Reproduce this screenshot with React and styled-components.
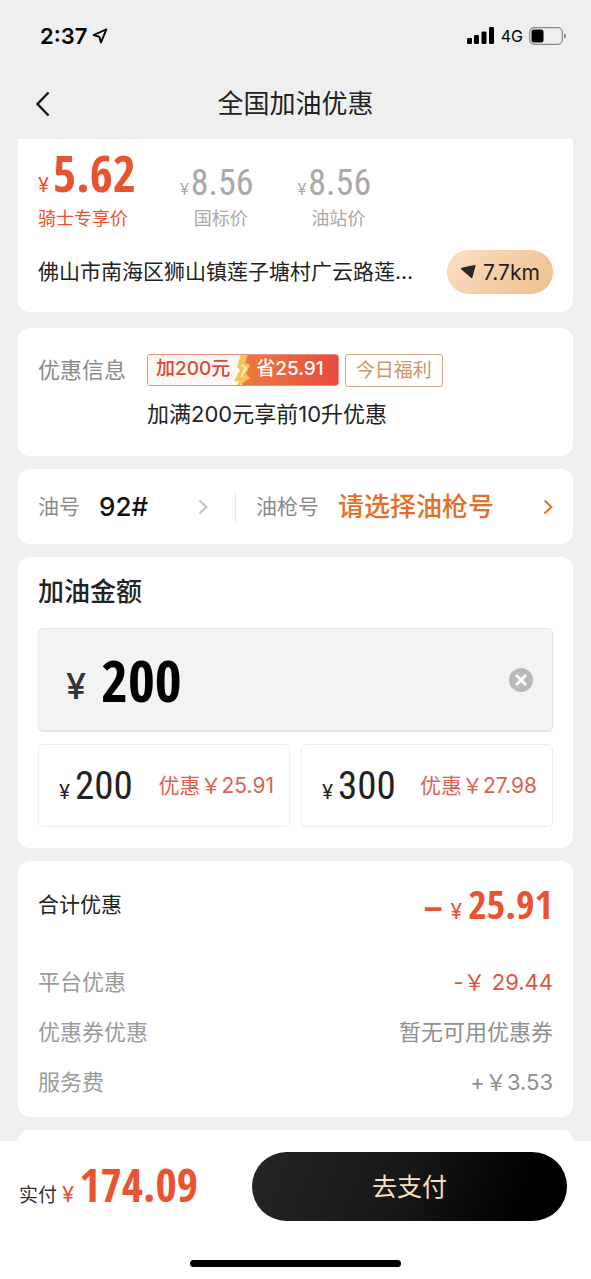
import React, { useState } from 'react';
import styled, { createGlobalStyle } from 'styled-components';

const prices = [
  { label: '骑士专享价', value: '5.62', main: true },
  { label: '国标价', value: '8.56' },
  { label: '油站价', value: '8.56' },
];

const presets = [
  { amount: '200', discount: '25.91' },
  { amount: '300', discount: '27.98' },
];

const fees = [
  { label: '平台优惠', value: '-￥ 29.44', accent: true },
  { label: '优惠券优惠', value: '暂无可用优惠券' },
  { label: '服务费', value: '+￥3.53' },
];

const Chevron = () => (
  <svg width="10" height="16" viewBox="0 0 10 16" fill="none" aria-hidden="true">
    <path d="M1.5 1.5L8.5 8L1.5 14.5" stroke="currentColor" strokeWidth="2" />
  </svg>
);

const LocationIcon = () => (
  <svg width="16" height="16" viewBox="0 0 16 16" fill="none" aria-hidden="true">
    <path d="M14.4 1.4L1.6 7L7.4 8.8L8.9 14.6Z" stroke="#000" strokeWidth="1.9" strokeLinejoin="round" />
  </svg>
);

const SignalIcon = () => (
  <svg width="28" height="18" viewBox="0 0 28 18" aria-hidden="true">
    <rect x="0" y="11" width="5" height="6" rx="1.3" />
    <rect x="7" y="8" width="5" height="9" rx="1.3" />
    <rect x="14.5" y="4.5" width="5" height="12.5" rx="1.3" />
    <rect x="22" y="0" width="5" height="17" rx="1.3" />
  </svg>
);

const BatteryIcon = () => (
  <svg width="38" height="18" viewBox="0 0 38 18" aria-hidden="true">
    <rect x="0.7" y="0.7" width="32.6" height="16.6" rx="4.5" fill="none" stroke="#8a8a8a" strokeWidth="1.2" />
    <rect x="2.5" y="2.5" width="12" height="13" rx="2.5" />
    <path d="M35 6v6q2-1 2-3t-2-3z" fill="#8a8a8a" />
  </svg>
);

const BackIcon = () => (
  <svg width="16" height="28" viewBox="0 0 16 28" fill="none" aria-hidden="true">
    <path d="M13.5 2.5L2.5 14L13.5 25.5" stroke="#111" strokeWidth="2.4" />
  </svg>
);

const NavIcon = () => (
  <svg width="17" height="16" viewBox="0 0 17 16" aria-hidden="true">
    <path d="M1.5 3.8L14.4 1Q15.9 0.8 15.5 2.1L12.4 13.4Q11.7 14.8 10.6 13.6L1.6 5.8Q0.4 4.4 1.5 3.8Z" fill="#2d2823" />
  </svg>
);

const BoltIcon = () => (
  <svg width="20" height="33" viewBox="0 0 20 33" aria-hidden="true">
    <path d="M9 0L16 0L13 9L18 11L14 20L18 24L5 33L7 27L2 27L8 16L5 13Z" fill="#f6c452" />
    <path d="M10 11L14 14L9 23" fill="none" stroke="#fdf0cf" strokeWidth="2" />
  </svg>
);

const ClearIcon = () => (
  <svg width="24" height="24" viewBox="0 0 24 24" aria-hidden="true">
    <circle cx="12" cy="12" r="12" fill="#b9b9b9" />
    <path d="M7 7L17 17M17 7L7 17" stroke="#fff" strokeWidth="2.6" />
  </svg>
);

export default function App() {
  const [amount, setAmount] = useState('200');

  return (
    <Screen>
      <GlobalStyle />
      <StatusBar>
        <Clock>
          2:37
          <LocationIcon />
        </Clock>
        <Network>
          <SignalIcon />
          4G
          <BatteryIcon />
        </Network>
      </StatusBar>
      <Header>
        <BackButton type="button" aria-label="返回">
          <BackIcon />
        </BackButton>
        <Title>全国加油优惠</Title>
      </Header>

      <Content>
        <StationCard>
          <Prices>
            {prices.map((price) => (
              <Price key={price.label} $main={price.main}>
                <PriceValue $main={price.main}>
                  <small>¥</small>
                  {price.value}
                </PriceValue>
                <PriceLabel $main={price.main}>{price.label}</PriceLabel>
              </Price>
            ))}
          </Prices>
          <AddressRow>
            <Address>佛山市南海区狮山镇莲子塘村广云路莲…</Address>
            <Distance type="button">
              <NavIcon />
              7.7km
            </Distance>
          </AddressRow>
        </StationCard>

        <PromoCard>
          <PromoLabel>优惠信息</PromoLabel>
          <div>
            <Tags>
              <SaveTag>
                <SaveFrom>加200元</SaveFrom>
                <SaveTo>
                  <Bolt>
                    <BoltIcon />
                  </Bolt>
                  省25.91
                </SaveTo>
              </SaveTag>
              <Tag>今日福利</Tag>
            </Tags>
            <PromoText>加满200元享前10升优惠</PromoText>
          </div>
        </PromoCard>

        <PickerCard>
          <OilPicker>
            <PickerLabel htmlFor="oil">油号</PickerLabel>
            <Select id="oil">
              <option>92#</option>
            </Select>
            <Chevron />
          </OilPicker>
          <GunPicker>
            <PickerLabel htmlFor="gun">油枪号</PickerLabel>
            <Select id="gun" $accent>
              <option>请选择油枪号</option>
            </Select>
            <Chevron />
          </GunPicker>
        </PickerCard>

        <AmountCard>
          <AmountTitle htmlFor="amount">加油金额</AmountTitle>
          <AmountBox>
            <span>¥</span>
            <AmountInput
              id="amount"
              inputMode="numeric"
              value={amount}
              onChange={(e) => setAmount(e.target.value)}
            />
            <ClearButton type="button" aria-label="清除" onClick={() => setAmount('')}>
              <ClearIcon />
            </ClearButton>
          </AmountBox>
          <Presets>
            {presets.map((preset) => (
              <Preset key={preset.amount} type="button" onClick={() => setAmount(preset.amount)}>
                <PresetAmount>
                  <small>¥</small>
                  {preset.amount}
                </PresetAmount>
                <PresetDiscount>优惠￥{preset.discount}</PresetDiscount>
              </Preset>
            ))}
          </Presets>
        </AmountCard>

        <SummaryCard>
          <Total>
            <TotalLabel>合计优惠</TotalLabel>
            <TotalValue>
              <b>−</b>
              <small>¥</small>
              25.91
            </TotalValue>
          </Total>
          {fees.map((fee) => (
            <Fee key={fee.label}>
              <dt>{fee.label}</dt>
              <FeeValue $accent={fee.accent}>{fee.value}</FeeValue>
            </Fee>
          ))}
        </SummaryCard>

        <NextCard />
      </Content>

      <Footer>
        <PayRow>
          <PayTotal>
            <span>实付</span>
            <small>¥</small>
            174.09
          </PayTotal>
          <PayButton type="button">去支付</PayButton>
        </PayRow>
        <HomeIndicator />
      </Footer>
    </Screen>
  );
}

const GlobalStyle = createGlobalStyle`
  * {
    box-sizing: border-box;
  }
  body {
    margin: 0;
    background: #efefef;
    color: #222;
    font-family: Inter, "Noto Sans CJK SC", sans-serif;
  }
  button, input, select {
    font-family: inherit;
    color: inherit;
    border: 0;
    padding: 0;
    background: none;
  }
  svg {
    flex: none;
    display: block;
  }
`;

const Screen = styled.div`
  display: flex;
  flex-direction: column;
  min-height: 100vh;
`;

const StatusBar = styled.div`
  display: flex;
  align-items: center;
  justify-content: space-between;
  height: 68px;
  padding: 4px 24px 0 40px;
`;

const Clock = styled.div`
  display: flex;
  align-items: center;
  gap: 5px;
  color: #000;
  font-size: 22px;
  font-weight: 600;
`;

const Network = styled.div`
  display: flex;
  align-items: center;
  gap: 6px;
  color: #000;
  font-size: 16px;
`;

const Header = styled.header`
  display: grid;
  grid-template-columns: 1fr auto 1fr;
  align-items: center;
  height: 71px;
  padding: 0 35px;
`;

const BackButton = styled.button`
  justify-self: start;
`;

const Title = styled.h1`
  margin: 0;
  font-size: 26px;
  font-weight: 400;
  line-height: 36px;
`;

const Content = styled.main`
  display: flex;
  flex-direction: column;
  flex: 1;
  gap: 13px;
  padding: 0 18px;
`;

const Card = styled.section`
  padding: 20px;
  border-radius: 12px;
  background: #fff;
`;

const StationCard = styled(Card)`
  margin-bottom: 3px;
  padding: 12px 20px 18px;
  border-radius: 0 0 12px 12px;
`;

const Prices = styled.div`
  display: flex;
  align-items: flex-end;
  gap: 44px;
`;

const Price = styled.div`
  color: ${(p) => (p.$main ? '#e9532f' : '#a9a9a9')};
`;

const PriceValue = styled.div`
  display: flex;
  align-items: baseline;
  gap: ${(p) => (p.$main ? '4px' : '2px')};
  font-family: ${(p) => (p.$main ? '"Open Sans Condensed"' : '"Roboto Condensed"')}, sans-serif;
  font-size: ${(p) => (p.$main ? '50px' : '36px')};
  font-weight: ${(p) => (p.$main ? 700 : 400)};
  line-height: ${(p) => (p.$main ? '44px' : '36px')};

  small {
    font-family: Inter, sans-serif;
    font-size: ${(p) => (p.$main ? '20px' : '16px')};
    font-weight: 400;
  }
`;

const PriceLabel = styled.div`
  padding-left: ${(p) => (p.$main ? '0' : '8px')};
  font-size: 18px;
  line-height: 24px;
  text-align: ${(p) => (p.$main ? 'left' : 'center')};
`;

const AddressRow = styled.div`
  display: flex;
  align-items: center;
  justify-content: space-between;
  gap: 20px;
  margin-top: 19px;
`;

const Address = styled.div`
  min-width: 0;
  overflow: hidden;
  font-size: 21px;
  line-height: 32px;
  text-overflow: ellipsis;
  white-space: nowrap;
`;

const Distance = styled.button`
  display: flex;
  align-items: center;
  justify-content: center;
  flex: none;
  gap: 6px;
  width: 106px;
  height: 44px;
  border-radius: 22px;
  background: linear-gradient(135deg, #fae0c5, #f0bd8b);
  font-size: 21px;
`;

const PromoCard = styled(Card)`
  display: flex;
  gap: 21px;
  padding: 25px 20px 27px;
`;

const PromoLabel = styled.div`
  color: #8b8b8b;
  font-size: 22px;
  line-height: 34px;
`;

const Tags = styled.div`
  display: flex;
  align-items: center;
  gap: 6px;
  height: 34px;
`;

const SaveTag = styled.div`
  display: flex;
  height: 32px;
  border: 1px solid #e88f80;
  border-radius: 3px;
  overflow: hidden;
  font-size: 19px;
  font-weight: 500;
  line-height: 28px;
`;

const SaveFrom = styled.span`
  padding: 0 12px 0 8px;
  background: #fff7f4;
  color: #d9483b;
`;

const SaveTo = styled.span`
  position: relative;
  padding: 0 14px;
  background: linear-gradient(90deg, #ec7b3e, #e84a40);
  color: #fff;
`;

const Bolt = styled.span`
  position: absolute;
  top: -1px;
  left: -10px;
`;

const Tag = styled.div`
  padding: 0 10px;
  border: 1px solid #d9a98a;
  border-radius: 3px;
  color: #cf9468;
  font-size: 19px;
  line-height: 31px;
`;

const PromoText = styled.div`
  margin-top: 12px;
  font-size: 22px;
  line-height: 30px;
`;

const PickerCard = styled(Card)`
  display: grid;
  grid-template-columns: minmax(0, 5fr) minmax(0, 8fr);
  align-items: center;
  height: 75px;
  padding: 0 20px;
`;

const OilPicker = styled.div`
  display: flex;
  align-items: center;
  gap: 19px;
  height: 30px;
  padding-right: 27px;
  border-right: 1px solid #e6e6e6;
  color: #c4c4c4;
`;

const GunPicker = styled.div`
  display: flex;
  align-items: center;
  gap: 19px;
  padding-left: 20px;
  color: #e0702a;
`;

const PickerLabel = styled.label`
  flex: none;
  padding-bottom: 3px;
  color: #8b8b8b;
  font-size: 21px;
`;

const Select = styled.select`
  flex: 1;
  min-width: 0;
  appearance: none;
  color: ${(p) => (p.$accent ? '#e0702a' : '#111')};
  font-size: 26px;
  font-weight: 500;
  line-height: 36px;
`;

const AmountCard = styled(Card)`
  padding-bottom: 21px;
`;

const AmountTitle = styled.label`
  display: block;
  font-size: 26px;
  font-weight: 500;
  line-height: 30px;
`;

const AmountBox = styled.div`
  display: flex;
  align-items: center;
  height: 104px;
  margin-top: 21px;
  padding: 0 19px 0 27px;
  border: 1px solid #e6e6e6;
  border-bottom-width: 2px;
  border-radius: 5px;
  background: #f3f3f3;

  span {
    padding-top: 12px;
    color: #333;
    font-size: 36px;
    font-weight: 500;
  }
`;

const AmountInput = styled.input`
  flex: 1;
  min-width: 0;
  margin-left: 15px;
  outline: 0;
  color: #000;
  font-family: "Open Sans Condensed", sans-serif;
  font-size: 58px;
  font-weight: 700;
`;

const ClearButton = styled.button`
  flex: none;
`;

const Presets = styled.div`
  display: grid;
  grid-template-columns: 1fr 1fr;
  gap: 11px;
  margin-top: 12px;
`;

const Preset = styled.button`
  display: flex;
  align-items: center;
  justify-content: space-between;
  height: 83px;
  padding: 0 15px 0 20px;
  border: 1px solid #ededed;
  border-radius: 5px;
`;

const PresetAmount = styled.span`
  display: flex;
  align-items: baseline;
  gap: 5px;
  font-family: "Roboto Condensed", sans-serif;
  font-size: 39px;

  small {
    font-family: Inter, sans-serif;
    font-size: 20px;
  }
`;

const PresetDiscount = styled.span`
  padding-bottom: 3px;
  color: #dd6350;
  font-size: 21px;
`;

const SummaryCard = styled(Card).attrs({ as: 'dl' })`
  margin: 0;
  padding-bottom: 12px;
`;

const Total = styled.div`
  display: flex;
  align-items: center;
  justify-content: space-between;
  height: 44px;
  margin-bottom: 30px;
`;

const TotalLabel = styled.dt`
  font-size: 21px;
`;

const TotalValue = styled.dd`
  display: flex;
  align-items: baseline;
  gap: 6px;
  margin: 0;
  color: #e9532f;
  font-family: "Open Sans Condensed", sans-serif;
  font-size: 40px;
  font-weight: 700;

  small {
    font-family: Inter, sans-serif;
    font-size: 21px;
    font-weight: 400;
  }

  b {
    font-family: Inter, sans-serif;
    font-size: 34px;
    font-weight: 600;
  }
`;

const Fee = styled.div`
  display: flex;
  align-items: center;
  justify-content: space-between;
  height: 50px;
  color: #9b9b9b;
  font-size: 22px;
`;

const FeeValue = styled.dd`
  margin: 0;
  color: ${(p) => (p.$accent ? '#e0543f' : '#8f8f8f')};
`;

const NextCard = styled(Card)`
  flex: 1;
  min-height: 11px;
  padding: 0;
  border-radius: 12px 12px 0 0;
`;

const Footer = styled.footer`
  position: sticky;
  bottom: 0;
  padding: 11px 0 12px;
  background: #fff;
`;

const PayRow = styled.div`
  display: flex;
  align-items: center;
  padding: 0 24px 0 19px;
`;

const PayTotal = styled.div`
  display: flex;
  align-items: baseline;
  flex: 0 0 233px;
  gap: 5px;
  padding-bottom: 6px;
  color: #e9532f;
  font-family: "Open Sans Condensed", sans-serif;
  font-size: 46px;
  font-weight: 700;

  span,
  small {
    font-family: Inter, "Noto Sans CJK SC", sans-serif;
    font-size: 19px;
    font-weight: 400;
  }

  span {
    color: #333;
  }

  small {
    font-size: 22px;
  }
`;

const PayButton = styled.button`
  flex: 1;
  height: 69px;
  padding-bottom: 3px;
  border-radius: 35px;
  background: linear-gradient(110deg, #262626, #161616 50%, #000 85%);
  color: #f9dfc0;
  font-size: 25px;
`;

const HomeIndicator = styled.div`
  width: 211px;
  height: 7px;
  margin: 39px auto 0;
  border-radius: 4px;
  background: #000;
`;
